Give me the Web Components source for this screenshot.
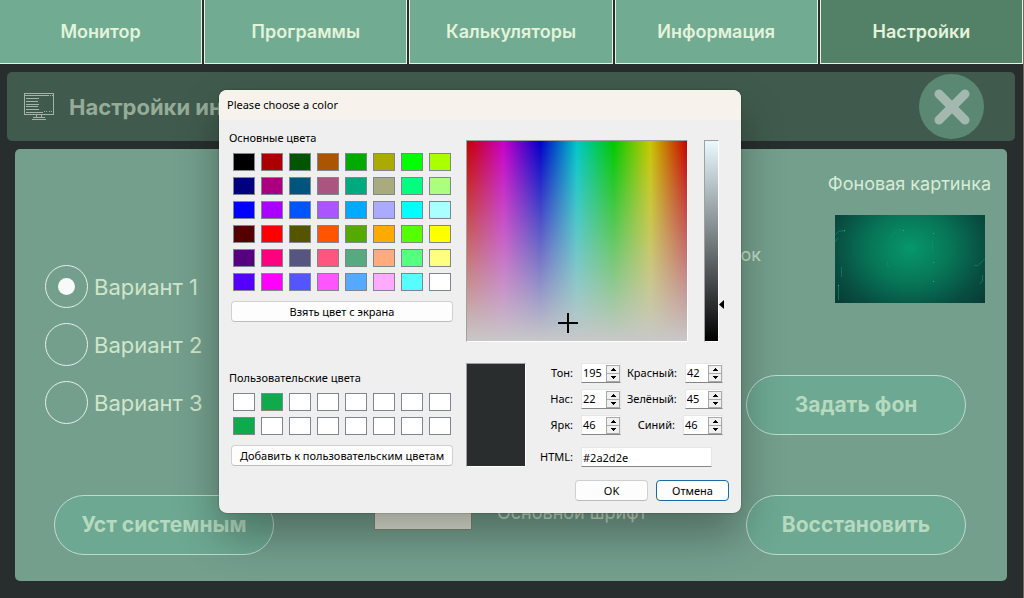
<!DOCTYPE html>
<html lang="ru">
<head>
<meta charset="utf-8">
<title>Настройки</title>
<style>
html, body { margin: 0; }
body { font-family: Inter, "Noto Sans", sans-serif; background: #282e2e; }
</style>
</head>
<body>
<settings-app></settings-app>
<script>
const define = (name, html, setup) => {
  const template = document.createElement('template');
  template.innerHTML = html;
  customElements.define(name, class extends HTMLElement {
    connectedCallback() {
      if (this.shadowRoot) return;
      this.attachShadow({ mode: 'open' }).append(template.content.cloneNode(true));
      if (setup) setup(this, this.shadowRoot);
    }
  });
};

/* ---------- main window ---------- */

define('nav-tab', `
<style>
:host { display: block; }
button { display: block; width: 100%; height: 64px; padding: 0; font: 600 18px/22px Inter, "Noto Sans", sans-serif;
  color: #e3f3dc; background: #71ab92; border: 1px solid #e6f2e4; border-top: 0; }
:host([active]) button { background: #538168; }
</style>
<button type="button"><slot></slot></button>`);

define('top-nav', `
<style>
:host { display: block; }
nav { display: grid; grid-template-columns: repeat(5, 1fr); gap: 2px; margin-left: -1px; }
</style>
<nav>
  <nav-tab>Монитор</nav-tab><nav-tab>Программы</nav-tab><nav-tab>Калькуляторы</nav-tab>
  <nav-tab>Информация</nav-tab><nav-tab active>Настройки</nav-tab>
</nav>`);

define('page-header', `
<style>
:host { display: block; }
header { display: flex; align-items: center; height: 69px; padding: 0 31px 0 17px; box-sizing: border-box;
  background: #405b4d; border-radius: 5px; }
h1 { flex: 1; margin: 0 0 0 15px; font-size: 22px; line-height: 28px; font-weight: 700; color: #96ab98; white-space: nowrap; }
button { width: 65px; height: 65px; padding: 0; border: 0; border-radius: 50%; background: #5a8872; }
svg { display: block; }
</style>
<header>
  <svg width="30" height="27" viewBox="0 0 30 27" fill="none" stroke="#a3b3a8" shape-rendering="crispEdges">
    <path d="M.5 .5h29v21H.5zM1 2.5h24M26 2.5h1M28 2.5h1M2 5.5h13M2 8.5h12M2 11.5h13M2 13.5h12M2 16.5h13M2 19.5h17M20 18.5h1M22 18.5h1M25 18.5h1M27 18.5h1M12.500 22v3M17.500 22v3M9 24.500h12M8 26.500h14"/>
  </svg>
  <h1><slot></slot></h1>
  <button type="button" aria-label="Закрыть">
    <svg width="65" height="65" viewBox="0 0 65 65"><path d="M20 20L46 46M46 20L20 46" stroke="#a3b8ae" stroke-width="9" stroke-linecap="round"/></svg>
  </button>
</header>`);

define('pill-button', `
<style>
:host { display: block; }
button { width: 220px; height: 60px; padding: 0; font: 700 21px/24px Inter, "Noto Sans", sans-serif; color: #b5dac0;
  background: #6da892; border: 1px solid #bfdccb; border-radius: 30px; }
</style>
<button type="button"><slot></slot></button>`);

define('variant-picker', `
<style>
:host { display: block; }
fieldset { display: grid; gap: 15px; margin: 0; padding: 0; border: 0; }
label { display: flex; align-items: center; gap: 6px; font-size: 22px; line-height: 24px; color: #cfe6cc; white-space: nowrap; }
input { appearance: none; display: grid; place-content: center; width: 43px; height: 43px; margin: 0; box-sizing: border-box;
  border: 1px solid #e6f0ea; border-radius: 50%; }
input:checked::before { content: ""; width: 17px; height: 17px; border-radius: 50%; background: #f7faf8; }
</style>
<fieldset>
  <label><input type="radio" name="variant" checked>Вариант 1</label>
  <label><input type="radio" name="variant">Вариант 2</label>
  <label><input type="radio" name="variant">Вариант 3</label>
</fieldset>`);

define('color-row', `
<style>
:host { display: flex; align-items: center; gap: 25px; font-size: 18px; line-height: 22px; color: #c6dfc8; white-space: nowrap; }
:host([wide]) { justify-content: space-between; margin-right: -15px; }
button { flex: none; width: 98px; height: 34px; padding: 0; border: 1px solid #7d8a7c; background: #dfe3d3; }
</style>
<button type="button" aria-labelledby="name"></button><span id="name"><slot></slot></span>`);

define('background-preview', `
<style>
:host { display: block; width: 150px; height: 88px; background: radial-gradient(ellipse 92px 78px at 50% 38%, #07976d, #077556 45%, #084d41 82%, #08352f 115%); }
svg { display: block; }
</style>
<svg width="150" height="88" viewBox="0 0 150 88" fill="none" stroke="#128f75" stroke-width=".6">
  <path d="M0 20l4-4h6M0 27l3-4M55 22l7-7h7M97.500 25v12M6.500 52v10M3.500 71v14M52.500 47v3l3 3M139 50.500h4l7-7M147.500 60v6l-3 3"/>
  <path d="M9 15.500h1M98 18.500h1M98 47.500h1M98 66.500h1M3 70.500h1M68 15.500h1" stroke="#27b08c" stroke-width="1"/>
</svg>`);

define('settings-panel', `
<style>
:host { display: grid; grid-template-columns: 229px 1fr 245px; padding: 26px 16px 26px 30px; background: #749f8d; border-radius: 5px; }
section { display: flex; flex-direction: column; min-width: 0; }
.variants { padding-top: 90px; }
.variants pill-button { align-self: flex-end; margin-top: auto; }
.colors { justify-content: space-between; padding: 63px 0 25px 100px; }
.picture h2 { margin: 0 0 22px; align-self: flex-end; font-size: 18px; line-height: 18px; font-weight: 400; color: #d6ecd6; white-space: nowrap; }
.picture background-preview { align-self: flex-end; margin: 0 6px 72px 0; }
.picture pill-button + pill-button { margin-top: 60px; }
</style>
<section class="variants"><variant-picker></variant-picker><pill-button>Уст системным</pill-button></section>
<section class="colors"><color-row wide>ок</color-row><color-row>Основной шрифт</color-row></section>
<section class="picture"><h2>Фоновая картинка</h2><background-preview></background-preview>
  <pill-button>Задать фон</pill-button><pill-button>Восстановить</pill-button></section>`);

/* ---------- colour dialog ---------- */

define('dialog-button', `
<style>
:host { display: block; }
button { display: block; width: 100%; height: 21px; padding: 0; font: inherit; line-height: 14px; color: #000; background: #fdfdfd;
  border: 1px solid #d0d0d0; border-bottom-color: #bcbcbc; border-radius: 4px; white-space: nowrap; }
:host([default]) button { border-color: #1a69a8; }
</style>
<button type="button"><slot></slot></button>`);

define('swatch-grid', `
<style>
:host { display: grid; grid-template-columns: repeat(8, 22px); gap: 6px; }
button { height: 18px; padding: 0; border: 1px solid #808690; }
</style>`, (host, root) => {
  for (const color of host.getAttribute('colors').split(' ')) {
    const b = document.createElement('button');
    b.type = 'button';
    b.setAttribute('aria-label', '#' + color);
    b.style.background = '#' + color;
    root.append(b);
  }
});

define('spin-field', `
<style>
:host { display: flex; align-items: center; justify-content: flex-end; gap: 8px; }
.box { display: flex; align-items: center; width: 40px; height: 20px; box-sizing: border-box; background: #fff;
  border: 1px solid #e6e6e6; border-bottom-color: #868686; }
input { appearance: textfield; flex: 1; width: 0; padding: 0 0 0 1px; border: 0; background: none; font: inherit; line-height: 14px; color: #000; outline: 0; }
input::-webkit-inner-spin-button { display: none; }
.steps { display: grid; grid-template: 9px 8px / 14px; }
button { display: grid; place-content: center; padding: 0; border: 1px solid #a9a9a9; background: #f0f0f0; }
button + button { border-top: 0; }
svg { display: block; }
</style>
<label for="value"><slot></slot></label>
<div class="box"><input id="value" type="number"><div class="steps">
<button type="button" aria-label="Больше"><svg width="5" height="3"><path d="M2 0h1v1h1v1h1v1H0V2h1V1h1z"/></svg></button>
<button type="button" aria-label="Меньше"><svg width="5" height="3"><path d="M0 0h5v1H4v1H3v1H2V2H1V1H0z"/></svg></button>
</div></div>`, (host, root) => {
  const input = root.querySelector('input');
  const [up, down] = root.querySelectorAll('button');
  input.value = host.getAttribute('value');
  up.onclick = () => input.stepUp();
  down.onclick = () => input.stepDown();
});

define('text-field', `
<style>
:host { display: flex; align-items: center; gap: 8px; }
label { width: 30px; white-space: nowrap; display: flex; justify-content: flex-end; }
input { width: 131px; height: 20px; box-sizing: border-box; padding: 0 1px; font: inherit; color: #000; background: #fff;
  border: 1px solid #e6e6e6; border-bottom-color: #868686; outline: 0; }
</style>
<label for="value"><slot></slot></label><input id="value" type="text">`, (host, root) => {
  root.querySelector('input').value = host.getAttribute('value');
});

define('hue-field', `
<style>
:host { display: block; position: relative; width: 222px; height: 202px; box-sizing: border-box; border: 1px solid; border-color: #a0a0a0 #fff #fff #a0a0a0;
  background: linear-gradient(to bottom, rgba(200,200,200,0), #c8c8c8),
    linear-gradient(to right, #c80000, #c800c8, #0000c8, #00c8c8, #00c800, #c8c800, #c80000); }
svg { position: absolute; left: 91px; top: 172px; }
</style>
<svg width="20" height="20"><path d="M9 0h2v9h9v2h-9v9H9v-9H0V9h9z"/></svg>`);

define('value-strip', `
<style>
:host { display: block; position: relative; width: 15px; height: 202px; box-sizing: border-box; border: 1px solid; border-color: #a0a0a0 #fff #fff #a0a0a0;
  background: linear-gradient(#e9f9ff, #000); }
svg { position: absolute; left: 14px; top: 159px; }
</style>
<svg width="5" height="9"><path d="M5 0v9L0 4.500z"/></svg>`);

define('color-dialog', `
<style>
:host { display: block; width: 522px; overflow: hidden; border-radius: 8px; background: #efefef; color: #000;
  font: 11px/14px "Noto Sans", "DejaVu Sans", sans-serif;
  box-shadow: 0 22px 44px rgba(0,0,0,.32), 0 0 2px rgba(0,0,0,.4); }
h2 { margin: 0; padding: 0 8px; background: #f7f2ec; font: 400 11px/30px "Noto Sans", sans-serif; }
h3 { margin: 0 0 8px; font: inherit; white-space: nowrap; }
.body { display: grid; grid-template-columns: 224px 263px; column-gap: 13px; padding: 11px 12px 12px 10px; }
.palette swatch-grid { margin: 0 0 10px 4px; }
.palette dialog-button { margin-left: 2px; }
.custom { margin-top: 49px; }
.picker { padding-top: 9px; }
.map { display: flex; gap: 16px; }
.detail { display: flex; gap: 17px; margin-top: 21px; }
.current { width: 60px; height: 104px; box-sizing: border-box; background: #2a2d2e; border: 1px solid; border-color: #a0a0a0 #fff #fff #a0a0a0; }
.spins { display: grid; grid-template-columns: 78px 96px; gap: 6px; margin-bottom: 12px; }
.actions { display: grid; grid-template-columns: 73px 73px; justify-content: end; gap: 8px; margin-top: 13px; }
</style>
<h2>Please choose a color</h2>
<div class="body">
  <div class="palette">
    <h3>Основные цвета</h3>
    <swatch-grid colors="000000 aa0000 005500 aa5500 00aa00 aaaa00 00ff00 aaff00 00007f aa007f 00557f aa557f 00aa7f aaaa7f 00ff7f aaff7f 0000ff aa00ff 0055ff aa55ff 00aaff aaaaff 00ffff aaffff 550000 ff0000 555500 ff5500 55aa00 ffaa00 55ff00 ffff00 55007f ff007f 55557f ff557f 55aa7f ffaa7f 55ff7f ffff7f 5500ff ff00ff 5555ff ff55ff 55aaff ffaaff 55ffff ffffff"></swatch-grid>
    <dialog-button>Взять цвет с экрана</dialog-button>
    <h3 class="custom">Пользовательские цвета</h3>
    <swatch-grid colors="ffffff 0eaa4c ffffff ffffff ffffff ffffff ffffff ffffff 0eaa4c ffffff ffffff ffffff ffffff ffffff ffffff ffffff"></swatch-grid>
    <dialog-button>Добавить к пользовательским цветам</dialog-button>
  </div>
  <div class="picker">
    <div class="map"><hue-field></hue-field><value-strip></value-strip></div>
    <div class="detail">
      <div class="current"></div>
      <div>
        <div class="spins">
          <spin-field value="195">Тон:</spin-field><spin-field value="42">Красный:</spin-field>
          <spin-field value="22">Нас:</spin-field><spin-field value="45">Зелёный:</spin-field>
          <spin-field value="46">Ярк:</spin-field><spin-field value="46">Синий:</spin-field>
        </div>
        <text-field value="#2a2d2e">HTML:</text-field>
      </div>
    </div>
    <div class="actions"><dialog-button>OK</dialog-button><dialog-button default>Отмена</dialog-button></div>
  </div>
</div>`);

define('settings-app', `
<style>
:host { display: flex; flex-direction: column; position: relative; min-height: 100vh; box-sizing: border-box; border-right: 1px solid #75695f; }
page-header { margin: 8px 8px 8px 7px; }
settings-panel { flex: 1; margin: 0 16px 17px 15px; }
color-dialog { position: absolute; left: 219px; top: 90px; }
</style>
<top-nav></top-nav>
<page-header>Настройки ин</page-header>
<settings-panel></settings-panel>
<color-dialog role="dialog" aria-label="Please choose a color"></color-dialog>`);
</script>
</body>
</html>
